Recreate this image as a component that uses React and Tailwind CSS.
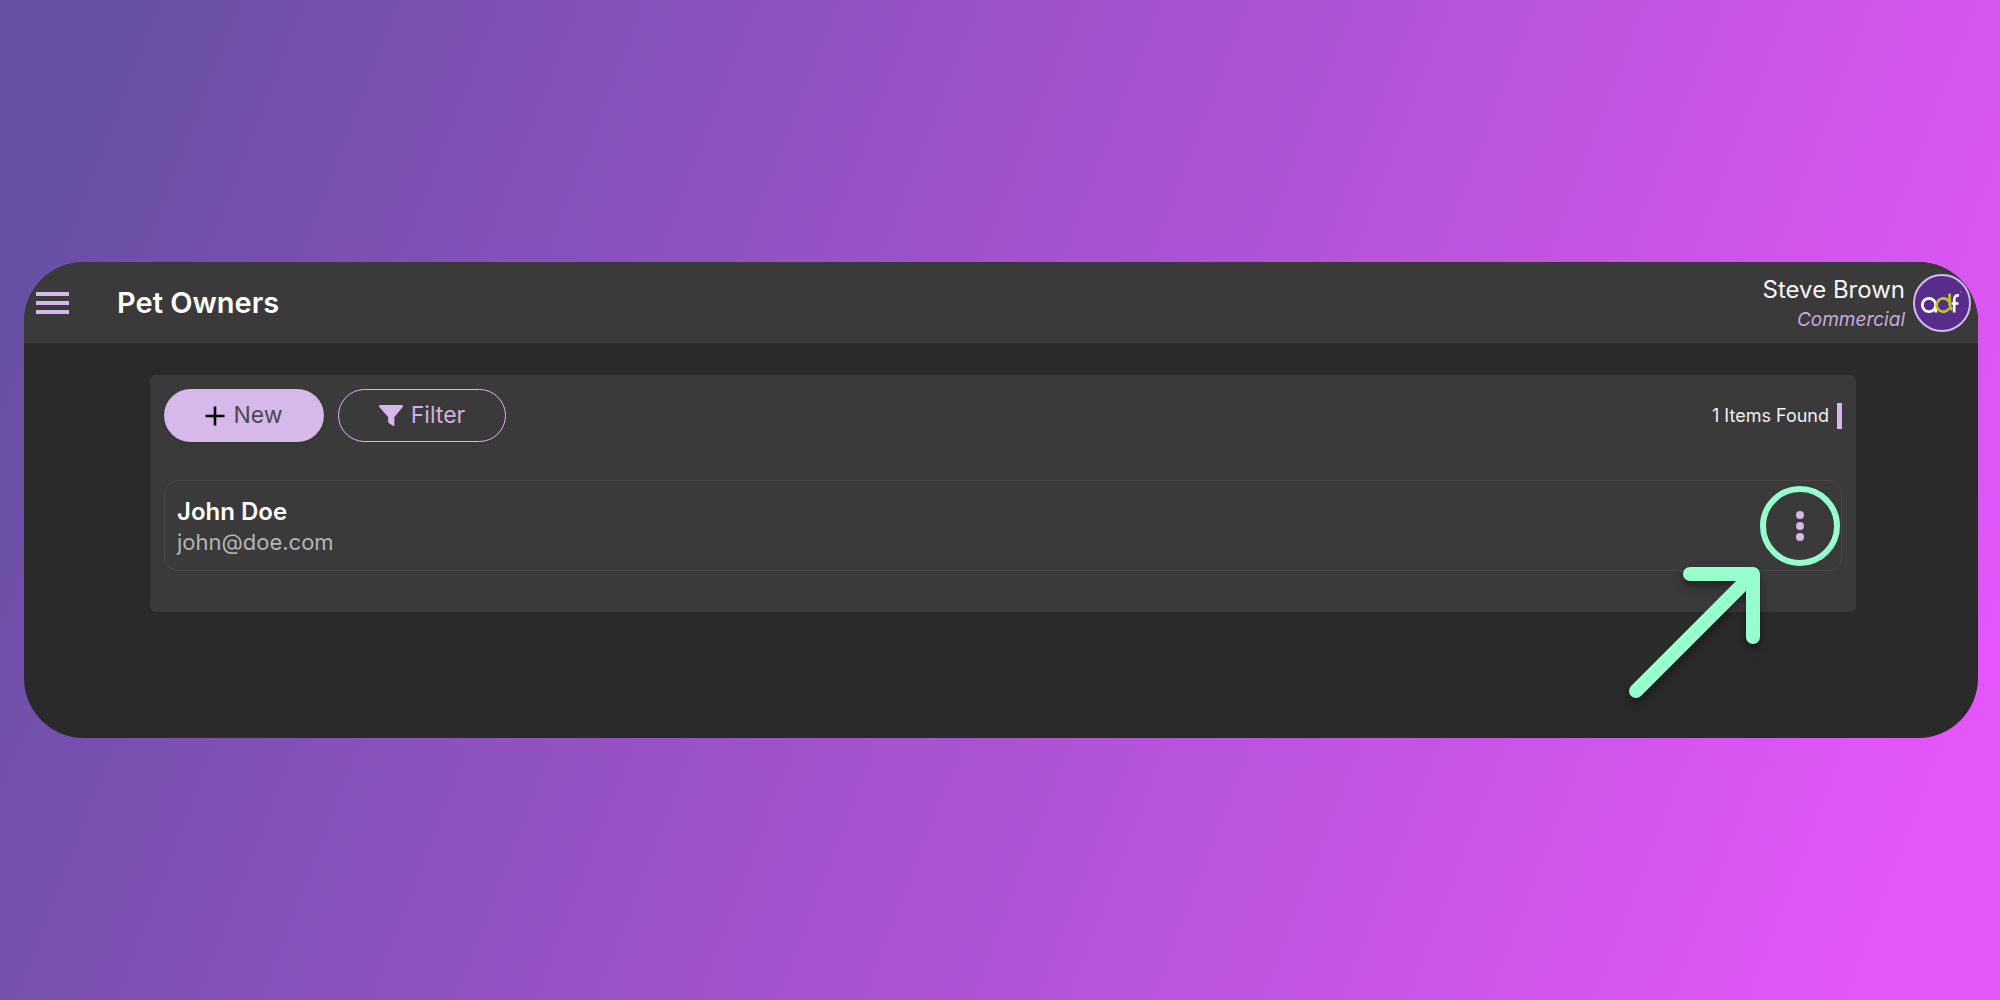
const owners = [{ id: 1, name: "John Doe", email: "john@doe.com" }];

function MenuIcon() {
    return (
        <svg viewBox="0 0 33 22" className="w-[33px] h-[22px]" fill="#d7b8ea" aria-hidden="true">
            <rect width="33" height="4" />
            <rect y="9" width="33" height="4" />
            <rect y="18" width="33" height="4" />
        </svg>
    );
}

function PlusIcon() {
    return (
        <svg viewBox="0 0 20 20" className="w-5 h-5" stroke="#000" strokeWidth="2.6" aria-hidden="true">
            <path d="M10 0.5v19M0.5 10h19" />
        </svg>
    );
}

function FilterIcon() {
    return (
        <svg viewBox="0 0 24 21" className="w-6 h-[21px]" fill="#d7b8ea" aria-hidden="true">
            <path d="M1.3 0h21.4c1.1 0 1.7 1.2 1 2.1L15.4 12v8c0 .8-.9 1.3-1.6.8l-4-2.9c-.4-.3-.6-.7-.6-1.1V12L.3 2.1C-.4 1.2.2 0 1.3 0z" />
        </svg>
    );
}

function DotsIcon() {
    return (
        <svg viewBox="0 0 8 30" className="w-2 h-[30px]" fill="#d7b8ea" aria-hidden="true">
            <circle cx="4" cy="4" r="4" />
            <circle cx="4" cy="15" r="4" />
            <circle cx="4" cy="26" r="4" />
        </svg>
    );
}

function Avatar() {
    return (
        <svg viewBox="0 0 58 58" className="w-[58px] h-[58px] shrink-0" fill="none" role="img" aria-label="Profile">
            <circle cx="29" cy="29" r="28" fill="#582c8b" stroke="#d7b8ea" strokeWidth="2" />
            <g strokeWidth="2.7">
                <circle cx="16" cy="31" r="6.7" stroke="#fff" />
                <path d="M22.8 30v8.6" stroke="#fff" />
                <path d="M36 27.4A6.7 6.7 0 1 0 36 34.6" stroke="#b5c920" />
                <path d="M36.6 19.5v9.5q0 4.500 2.400 7" stroke="#b5c920" />
                <path d="M46 21.500q-4.800-.8-4.800 4.500v12.600" stroke="#fff" />
                <path d="M38.500 29.500h7" stroke="#fff" />
            </g>
            <path d="M47 18.500l1.500-1" stroke="#9f80bd" />
        </svg>
    );
}

function Arrow() {
    return (
        <svg
            viewBox="0 0 140 140"
            className="absolute right-[77px] top-[81px] w-[140px] h-[140px] pointer-events-none drop-shadow-[0_5px_4px_rgba(0,0,0,0.4)]"
            fill="none"
            stroke="#96ffcd"
            strokeWidth="14"
            strokeLinecap="round"
            strokeLinejoin="round"
            aria-hidden="true"
        >
            <path d="M12 129L129 12M66 12h63v63" />
        </svg>
    );
}

function OwnerRow({ owner }) {
    return (
        <div className="relative flex items-center justify-between h-[91px] pl-3 pr-px rounded-[14px] border border-[#484848]">
            <div className="pt-0.5">
                <h2 className="text-[24px] leading-[30px] font-semibold text-white">{owner.name}</h2>
                <p className="text-[22px] leading-[30px] text-[#b4b4b4]">{owner.email}</p>
            </div>
            <button
                aria-label="Actions"
                className="w-20 h-20 flex items-center justify-center rounded-full border-6 border-[#96ffcd]"
            >
                <DotsIcon />
            </button>
            <Arrow />
        </div>
    );
}

export default function App() {
    return (
        <div className="min-h-screen flex items-center pl-6 pr-[22px] font-['Inter',sans-serif] bg-[linear-gradient(111deg,#6650a4_4%,#e556fa_95%)]">
            <main className="flex-1 rounded-[60px] overflow-hidden bg-[#2a2a2a] pb-[126px]">
                {/* Header */}
                <header className="h-[81px] flex items-center bg-[#3a3a3a] pl-3 pr-[7px]">
                    <button aria-label="Menu">
                        <MenuIcon />
                    </button>
                    <h1 className="ml-12 text-[29px] leading-9 font-semibold text-white">Pet Owners</h1>
                    <div className="ml-auto mr-2 pt-1 text-right">
                        <p className="text-[24px] leading-[30px] text-[#f5f5f5]">Steve Brown</p>
                        <p className="text-[19px] leading-[30px] italic text-[#c9a9dd]">Commercial</p>
                    </div>
                    <Avatar />
                </header>

                {/* Owners panel */}
                <section className="mt-8 ml-[126px] mr-[122px] px-3.5 pt-3.5 pb-[41px] rounded-md bg-[#3a3a3a]">
                    <div className="flex items-center gap-3.5 mb-[38px]">
                        <button className="w-40 h-[53px] flex items-center justify-center gap-2 rounded-full bg-[#d7b8ea] text-[23px] text-[#4a4a4a] shadow-sm">
                            <PlusIcon />
                            New
                        </button>
                        <button className="w-[168px] h-[53px] flex items-center justify-center gap-2 rounded-full border-[1px] border-[#d7b8ea] text-[23px] text-[#d0b1e3]">
                            <FilterIcon />
                            Filter
                        </button>
                        <p className="ml-auto pr-2 border-r-5 border-[#d7b8ea] text-[18px] leading-[26px] text-[#f0f0f0]">
                            {owners.length} Items Found
                        </p>
                    </div>
                    {owners.map((owner) => (
                        <OwnerRow key={owner.id} owner={owner} />
                    ))}
                </section>
            </main>
        </div>
    );
}
